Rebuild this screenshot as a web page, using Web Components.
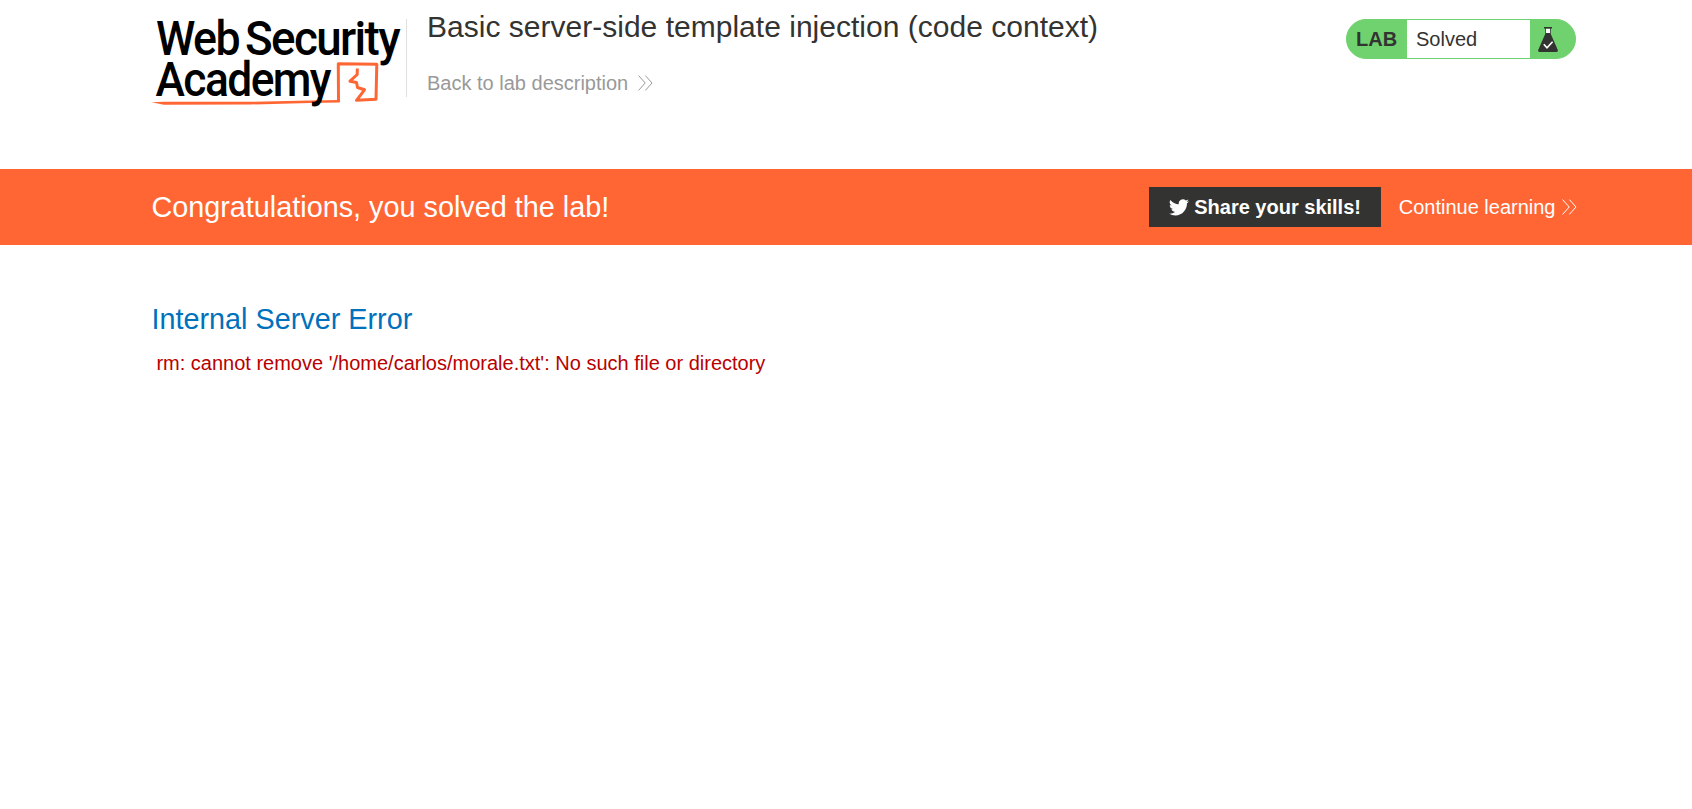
<!DOCTYPE html>
<html lang="en">
<head>
<meta charset="utf-8">
<title>Basic server-side template injection (code context)</title>
<style>
body{margin:0;background:#fff;color:#333332;font:20px/24px "Liberation Sans",Arial,sans-serif}
</style>
</head>
<body>
<lab-page></lab-page>
<script>
const define=(name,html)=>customElements.define(name,class extends HTMLElement{
  constructor(){
    super();
    const t=document.createElement('template');
    t.innerHTML=html;
    this.attachShadow({mode:'open'}).append(t.content.cloneNode(true));
  }
});

define('double-chevron',`<style>:host{display:block;width:15px;height:16px}svg{display:block}</style>
<svg width="15" height="16" viewBox="0 0 15 16" fill="none" stroke="currentColor" stroke-width="1"><path d="M.6.6 7.2 8 .6 15.4M7.4.6 14 8 7.4 15.4"/></svg>`);

define('academy-logo',`<style>:host{display:block;width:256px;height:100px}svg{display:block;overflow:visible}text{font-family:Roboto,sans-serif;font-weight:500;font-size:48px;letter-spacing:-1.700px;fill:#000}</style>
<svg width="256" height="100" viewBox="151 10 256 100">
<path fill="none" stroke="#ff6633" stroke-linejoin="round" stroke-width="3" d="M338.500 102 338.300 63.800 376.800 64.200 376 99.300 356.500 100.300 364.500 89.800 357.500 87.500 356.500 82.500 350 81.200 357.200 74.500 357.300 68.500"/>
<path fill="#ff6633" d="M151.500 102.300 164 101.800 250 101.800 310 100.600 339.500 100V102.600L310 103 250 104.500 164 104.800Z"/>
<text x="156" y="55.300" textLength="83" lengthAdjust="spacingAndGlyphs">Web</text>
<text x="245" y="55.300" textLength="154" lengthAdjust="spacingAndGlyphs">Security</text>
<text x="155.500" y="96" textLength="174.500" lengthAdjust="spacingAndGlyphs">Academy</text>
</svg>`);

define('lab-status',`<style>
:host{display:flex;box-sizing:border-box;width:230px;height:40px;border:1px solid #70d26e;border-radius:20px;overflow:hidden;background:#70d26e;line-height:38px}
b{width:60px;box-sizing:border-box;padding-left:9px}
span{width:123px;box-sizing:border-box;padding-left:9px;background:#fff}
svg{margin:7px 0 0 8px}
</style><b>LAB</b><span><slot></slot></span>
<svg width="20" height="26" viewBox="0 0 20 26"><path fill="#fff" d="M7.500 2h5v5h-5z"/><path fill="#333332" d="M6 0h8v1.500h-1.200V7L19.600 22.500Q20.600 25 18 25H2Q-.6 25 .4 22.500L7.200 7V1.500H6ZM8 1.500V6h4V1.500Z"/><path fill="none" stroke="#fff" stroke-width="1.600" d="M5.800 17.300 9 20.800 14.600 14.800"/></svg>`);

define('lab-header',`<style>
:host{display:block;height:169px}
.in{display:flex;padding:0 116px 0 151px}
academy-logo{margin-top:10px}
.rule{width:1px;height:78px;margin-top:19px;background:#e0e0e0;margin-left:-1px}
.info{flex:1;padding-left:20px}
h2{margin:9px 0 0;font-weight:400;font-size:30px;letter-spacing:.015px;line-height:36px;white-space:nowrap}
.back{display:flex;align-items:center;gap:10px;margin-top:26px;color:#999}
lab-status{margin-top:19px}
</style><div class="in"><academy-logo></academy-logo><div class="rule"></div><div class="info"><h2>Basic server-side template injection (code context)</h2><div class="back"><span>Back to lab description</span><double-chevron></double-chevron></div></div><lab-status>Solved</lab-status></div>`);

define('share-button',`<style>
:host{display:flex;box-sizing:border-box;width:232px;height:40px;padding-left:20px;align-items:center;background:#333332;color:#fff;font-weight:700}
svg{margin-right:5px}
</style><svg width="20" height="17" viewBox="0 0 24 20" fill="#fff"><path d="M23.950 2.400a10 10 0 0 1-2.830.770 4.960 4.960 0 0 0 2.170-2.720c-.950.550-2 .950-3.130 1.180A4.920 4.920 0 0 0 11.780 6.100 13.900 13.900 0 0 1 1.640.950 4.930 4.930 0 0 0 3.160 7.520a4.900 4.900 0 0 1-2.230-.610v.060a4.920 4.920 0 0 0 3.950 4.830 5 5 0 0 1-2.210.080 4.940 4.940 0 0 0 4.600 3.420A9.870 9.870 0 0 1 0 17.340a14 14 0 0 0 7.560 2.210c9.050 0 14-7.500 14-14v-.640a10 10 0 0 0 2.390-2.510Z"/></svg><slot></slot>`);

define('solved-banner',`<style>
:host{display:flex;box-sizing:border-box;height:76px;padding:0 115.500px 0 151.400px;align-items:center;background:#ff6633;color:#fff}
h4{flex:1;margin:0;font-size:28.800px;font-weight:400;line-height:36px}
a{display:flex;align-items:center;gap:6px;margin-left:17.500px}
</style><h4>Congratulations, you solved the lab!</h4><share-button>Share your skills!</share-button><a><span>Continue learning</span><double-chevron></double-chevron></a>`);

define('error-message',`<style>
:host{display:block;padding:56px 151.400px 0}
h4{margin:0;font-size:28.800px;font-weight:400;line-height:36px;color:#0071bc}
p{margin:14px 0 0;padding-left:5px;color:#b80000}
</style><h4><slot name="title"></slot></h4><p><slot></slot></p>`);

define('lab-page',`<style>:host{display:block}</style>
<lab-header></lab-header><solved-banner></solved-banner>
<error-message><span slot="title">Internal Server Error</span>rm: cannot remove '/home/carlos/morale.txt': No such file or directory</error-message>`);
</script>
</body>
</html>
